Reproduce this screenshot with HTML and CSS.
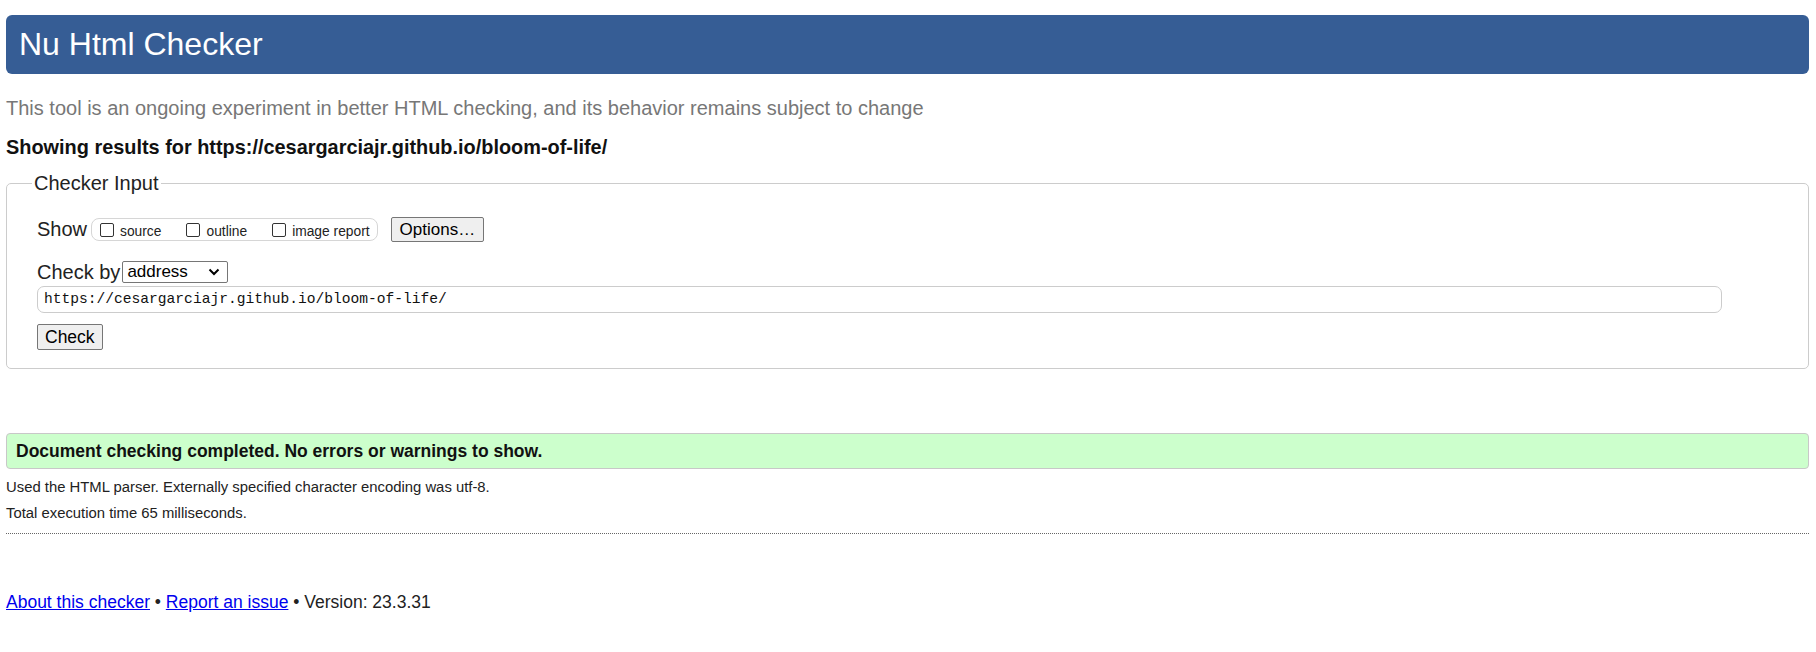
FILE: index.html
```html
<!DOCTYPE html>
<html lang="en">
<head>
<meta charset="utf-8">
<title>Nu Html Checker</title>
<link rel="stylesheet" href="styles.css">
</head>
<body>
<h1 class="title">Nu Html Checker</h1>
<p class="intro">This tool is an ongoing experiment in better HTML checking, and its behavior remains subject to change</p>
<p class="showing">Showing results for https://cesargarciajr.github.io/bloom-of-life/</p>
<fieldset class="input-box">
  <legend class="legend">Checker Input</legend>
  <div class="row show-row">
    <span class="label">Show</span>
    <span class="show-group">
      <label class="opt"><input type="checkbox" class="cb"><span>source</span></label>
      <label class="opt"><input type="checkbox" class="cb"><span>outline</span></label>
      <label class="opt"><input type="checkbox" class="cb"><span>image report</span></label>
    </span>
    <button class="btn options">Options…</button>
  </div>
  <div class="row by-row">
    <span class="label">Check by</span>
    <span class="select">address<svg class="chev" width="12" height="8" viewBox="0 0 12 8"><path d="M1.5 1.5 L6 6 L10.5 1.5" fill="none" stroke="#000" stroke-width="2"/></svg></span>
  </div>
  <div class="url">https://cesargarciajr.github.io/bloom-of-life/</div>
  <button class="btn check">Check</button>
</fieldset>
<div class="success">Document checking completed. No errors or warnings to show.</div>
<p class="details">Used the HTML parser. Externally specified character encoding was utf-8.</p>
<p class="details">Total execution time 65 milliseconds.</p>
<hr class="rule">
<p class="footer"><a href="#" class="link">About this checker</a> • <a href="#" class="link">Report an issue</a> • Version: 23.3.31</p>
</body>
</html>
```
FILE: styles.css
```css
html, body { background: #fff; }
body {
  margin: 0;
  padding: 15px 7px 0 6px;
  font-family: "Liberation Sans", Arial, sans-serif;
  color: #222;
}
.title {
  margin: 0;
  height: 59px;
  line-height: 59px;
  padding-left: 13px;
  background: #365d95;
  color: #fff;
  font-size: 32px;
  font-weight: normal;
  border-radius: 6px;
}
.intro {
  margin: 22px 0 0;
  font-size: 20px;
  line-height: 24px;
  color: #777;
}
.showing {
  margin: 15px 0 0;
  font-size: 19.9px;
  line-height: 24px;
  font-weight: bold;
  color: #111;
}
.input-box {
  margin: 12px 0 0;
  padding: 0 26px 18px 25px;
  border: 1px solid #ccc;
  border-radius: 5px;
  min-width: 0;
}
.legend {
  padding: 0 2px;
  font-size: 20px;
  line-height: 24px;
  color: #222;
}
.row {
  display: flex;
  align-items: center;
  padding-left: 5px;
}
.show-row { margin-top: 22px; height: 25px; }
.label { font-size: 20px; color: #222; }
.show-group {
  display: inline-flex;
  align-items: center;
  margin-left: 4px;
  height: 21px;
  padding: 0 7px 0 8px;
  border: 1px solid #d6d6d6;
  border-radius: 8px;
  font-size: 13.8px;
}
.opt { display: inline-flex; align-items: center; margin-right: 25px; }
.opt:last-child { margin-right: 0; }
.opt span { margin-top: 3px; }
.cb {
  appearance: none;
  width: 14px;
  height: 14px;
  margin: 0 6px 0 0;
  border: 1px solid #333;
  border-radius: 2px;
  background: #fff;
}
.btn {
  font-family: "Liberation Sans", Arial, sans-serif;
  font-size: 17px;
  color: #000;
  background: #efefef;
  border: 1px solid #767676;
  border-radius: 2px;
  padding: 0 8px;
  height: 25px;
}
.options { margin-left: 13px; }
.by-row { margin-top: 19px; height: 22px; }
.select {
  display: inline-flex;
  align-items: center;
  justify-content: space-between;
  width: 106px;
  height: 22px;
  box-sizing: border-box;
  margin-left: 2px;
  padding: 0 7px 0 4px;
  border: 1px solid #767676;
  border-radius: 2px;
  font-size: 17px;
  color: #000;
}
.url {
  margin: 3px 60px 0 5px;
  height: 27px;
  box-sizing: border-box;
  border: 1px solid #ccc;
  border-radius: 7px;
  padding: 0 6px;
  line-height: 25px;
  font-family: "Liberation Mono", Consolas, monospace;
  font-size: 14.6px;
  color: #111;
}
.check { margin: 11px 0 0 5px; height: 26px; padding: 0 7px; font-size: 17.5px; }
.success {
  margin-top: 64px;
  height: 36px;
  box-sizing: border-box;
  line-height: 34px;
  padding-left: 9px;
  background: #ccffcc;
  border: 1px solid #c8c8c8;
  border-radius: 4px;
  font-size: 17.5px;
  font-weight: bold;
  color: #111;
}
.details {
  margin: 9px 0 0;
  font-size: 14.85px;
  line-height: 19px;
  color: #222;
}
.details + .details { margin-top: 7px; }
.rule {
  margin: 10px 0 0;
  border: 0;
  border-top: 1px dotted #666;
  height: 0;
}
.footer {
  margin: 56px 0 0;
  font-size: 17.5px;
  line-height: 24px;
  color: #222;
}
.link { color: #0000ee; text-decoration: underline; }
```
